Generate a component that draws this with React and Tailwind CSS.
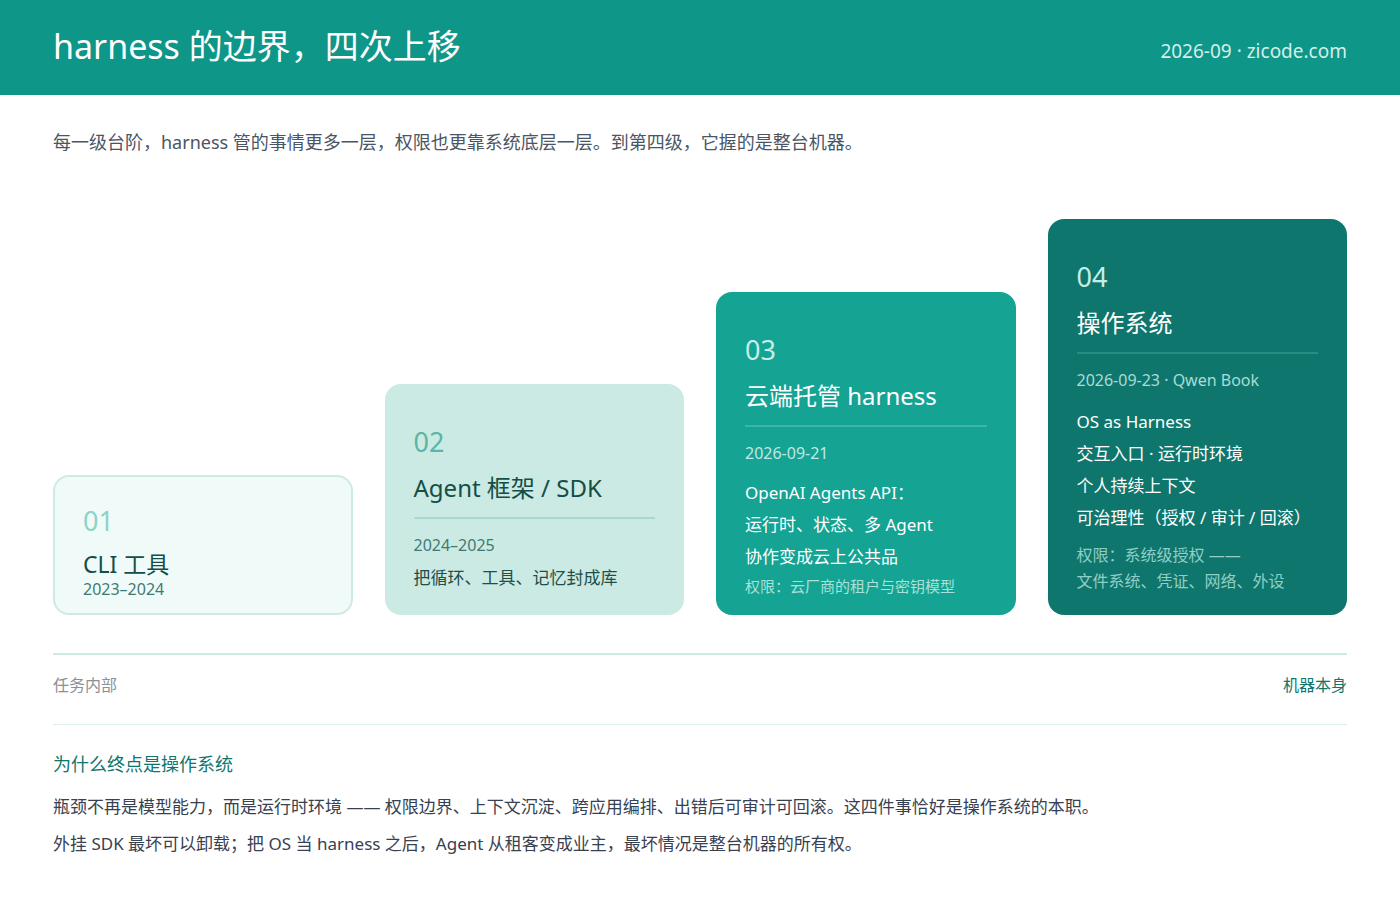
export default function App() {
  const font = { fontFamily: '"Noto Sans", "Noto Sans CJK SC", sans-serif' };
  return (
    <div className="min-h-screen bg-white" style={font}>
      <header className="h-[95px] bg-[#0e9688] px-[53px] flex items-center justify-between">
        <h1 className="text-[34px] text-white leading-none -mt-1">harness 的边界，四次上移</h1>
        <span className="text-[19px] text-[#d3efea] mt-2">2026-09 · zicode.com</span>
      </header>

      <main className="px-[53px]">
        <p className="text-[18px] text-[#4b5563] mt-[34px]">
          每一级台阶，harness 管的事情更多一层，权限也更靠系统底层一层。到第四级，它握的是整台机器。
        </p>

        {/* Steps */}
        <div className="mt-[62px] flex items-end gap-[32px] h-[397px]">
          <div className="w-[300px] h-[140px] rounded-2xl border-2 border-[#cdeae4] bg-[#f0faf8] px-[28px] pt-[30px]">
            <div className="text-[27px] text-[#8dd3c6] leading-none">01</div>
            <div className="text-[23px] text-[#134e48] mt-[16px] leading-tight">CLI 工具</div>
            <div className="text-[16px] text-[#3f7a72] leading-tight">2023–2024</div>
          </div>

          <div className="w-[300px] h-[231px] rounded-2xl bg-[#cbeae3] px-[29px] pt-[44px]">
            <div className="text-[27px] text-[#5cb5a6] leading-none">02</div>
            <div className="text-[24px] text-[#134e48] mt-[18px] leading-tight">Agent 框架 / SDK</div>
            <div className="h-[2px] bg-[#a6d9cf] mt-[14px]" />
            <div className="text-[16px] text-[#3f7a72] mt-[14px]">2024–2025</div>
            <div className="text-[17px] text-[#1e4f49] mt-[8px]">把循环、工具、记忆封成库</div>
          </div>

          <div className="w-[300px] h-[323px] rounded-2xl bg-[#15a394] px-[29px] pt-[44px]">
            <div className="text-[27px] text-[#c6eee7] leading-none">03</div>
            <div className="text-[24px] text-white mt-[18px] leading-tight">云端托管 harness</div>
            <div className="h-[2px] bg-[#3bb6a8] mt-[14px]" />
            <div className="text-[16px] text-[#bfe9e2] mt-[14px]">2026-09-21</div>
            <div className="text-[17px] text-white mt-[12px] leading-[32px]">
              OpenAI Agents API：<br />运行时、状态、多 Agent<br />协作变成云上公共品
            </div>
            <div className="text-[15px] text-[#a8e1d8] mt-[2px]">权限：云厂商的租户与密钥模型</div>
          </div>

          <div className="w-[300px] h-[396px] rounded-2xl bg-[#0f766e] px-[29px] pt-[44px]">
            <div className="text-[27px] text-[#c6eee7] leading-none">04</div>
            <div className="text-[24px] text-white mt-[18px] leading-tight">操作系统</div>
            <div className="h-[2px] bg-[#2b8c83] mt-[14px]" />
            <div className="text-[16px] text-[#a8dcd4] mt-[14px]">2026-09-23 · Qwen Book</div>
            <div className="text-[17px] text-white mt-[14px] leading-[32px]">
              OS as Harness<br />交互入口 · 运行时环境<br />个人持续上下文<br />可治理性（授权 / 审计 / 回滚）
            </div>
            <div className="text-[16px] text-[#8fcfc5] mt-[8px] leading-[26px]">
              权限：系统级授权 ——<br />文件系统、凭证、网络、外设
            </div>
          </div>
        </div>

        <div className="h-[2px] bg-[#cdeae4] mt-[38px]" />
        <div className="flex justify-between mt-[18px] text-[16px]">
          <span className="text-[#8a8f98]">任务内部</span>
          <span className="text-[#0f766e]">机器本身</span>
        </div>
        <div className="h-px bg-[#dcefeb] mt-[27px]" />

        <h2 className="text-[18px] text-[#0f766e] mt-[26px]">为什么终点是操作系统</h2>
        <p className="text-[17px] text-[#374151] mt-[10px] leading-[37px]">
          瓶颈不再是模型能力，而是运行时环境 —— 权限边界、上下文沉淀、跨应用编排、出错后可审计可回滚。这四件事恰好是操作系统的本职。<br />
          外挂 SDK 最坏可以卸载；把 OS 当 harness 之后，Agent 从租客变成业主，最坏情况是整台机器的所有权。
        </p>
      </main>
    </div>
  );
}
